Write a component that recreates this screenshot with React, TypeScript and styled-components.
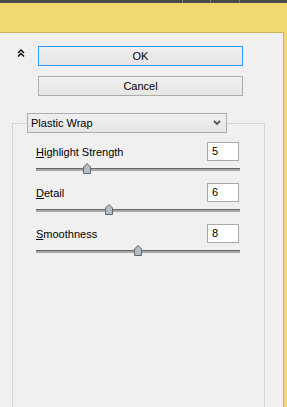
import styled, { createGlobalStyle } from 'styled-components';

const GlobalStyle = createGlobalStyle`
	body {
		margin: 0;
		font-family: 'Liberation Sans', Arial, sans-serif;
	}
`;

const Window = styled.div`
	width: 287px;
	height: 407px;
	display: flex;
	background: #f1d86f;
	overflow: hidden;
`;
const Main = styled.div`
	flex: 1;
	display: flex;
	flex-direction: column;
`;
const TopStrip = styled.div`
	height: 3px;
	display: flex;
	background: #4b4b4b;
`;
const Segment = styled.div<{ $w: number }>`
	flex: 0 0 ${(p) => p.$w}px;
	border-left: 1px solid #7d7d7d;
	&:first-child {
		border-left: none;
	}
`;
const DarkEdge = styled.div`
	width: 3px;
	background: #262626;
`;
const Frame = styled.div`
	flex: 1;
	display: flex;
	padding: 29px 6px 0 0;
	min-height: 0;
`;
const Panel = styled.div`
	flex: 1;
	display: flex;
	flex-direction: column;
	background: #f0f0f0;
	border-top: 1px solid #cbb45c;
	border-right: 1px solid #cbb45c;
	overflow: hidden;
`;
const Header = styled.div`
	display: flex;
	align-items: flex-start;
	padding: 13px 0 0 17px;
`;
const Collapse = styled.svg`
	margin-top: 3px;
	flex: 0 0 8px;
`;
const Buttons = styled.div`
	display: flex;
	flex-direction: column;
	gap: 10px;
	width: 205px;
	margin-left: 13px;
`;
const Button = styled.button<{ $default?: boolean }>`
	height: 20px;
	box-sizing: border-box;
	padding: 0;
	border: 1px solid ${(p) => (p.$default ? '#3399ff' : '#acacac')};
	background: linear-gradient(#f0f0f0, #e5e5e5);
	font-family: 'Liberation Sans', Arial, sans-serif;
	font-size: 11px;
	color: #000;
`;
const Group = styled.fieldset`
	flex: 1;
	margin: 17px 0 -20px 12px;
	width: 253px;
	box-sizing: border-box;
	padding: 0;
	border: 1px solid #d5d5d5;
`;
const Legend = styled.legend`
	padding: 0;
	margin-left: 14px;
`;
const Dropdown = styled.div`
	width: 200px;
	height: 20px;
	box-sizing: border-box;
	display: flex;
	align-items: center;
	justify-content: space-between;
	padding: 0 5px 0 3px;
	border: 1px solid #acacac;
	background: linear-gradient(#f0f0f0, #e5e5e5);
	font-size: 11px;
	color: #000;
`;
const Rows = styled.div`
	padding: 9px 24px 0 23px;
`;
const LabelLine = styled.div`
	height: 19px;
	display: flex;
	align-items: center;
	justify-content: space-between;
`;
const Label = styled.span`
	font-size: 11px;
	color: #000;
`;
const Field = styled.div`
	width: 32px;
	height: 19px;
	box-sizing: border-box;
	margin-right: 1px;
	padding: 0 4px;
	border: 1px solid #a9a9a9;
	background: #fff;
	font-size: 11px;
	line-height: 17px;
	color: #000;
`;
const Slider = styled.div`
	position: relative;
	height: 7px;
	padding-top: 5px;
	margin: 2px 0 8px;
`;
const Track = styled.div`
	height: 2px;
	border-top: 1px solid #666;
	background: #a8a8a8;
`;
const Thumb = styled.svg`
	position: absolute;
	top: 0;
`;

const TRACK = 204;

const params = [
	{ key: 'H', rest: 'ighlight Strength', value: 5, min: 0, max: 20 },
	{ key: 'D', rest: 'etail', value: 6, min: 1, max: 15 },
	{ key: 'S', rest: 'moothness', value: 8, min: 1, max: 15 },
];

const App = () => {
	return (
		<Window>
			<GlobalStyle />
			<Main>
				<TopStrip>
					<Segment $w={182} />
					<Segment $w={27} />
					<Segment $w={28} />
					<Segment $w={50} />
				</TopStrip>
				<Frame>
					<Panel>
						<Header>
							<Collapse width='8' height='8' viewBox='0 0 8 8'>
								<polyline points='1,4 4,1 7,4' fill='none' stroke='#000' strokeWidth='1.4' />
								<polyline points='1,7.5 4,4.5 7,7.5' fill='none' stroke='#000' strokeWidth='1.4' />
							</Collapse>
							<Buttons>
								<Button $default>OK</Button>
								<Button>Cancel</Button>
							</Buttons>
						</Header>
						<Group>
							<Legend>
								<Dropdown>
									Plastic Wrap
									<svg width='8' height='6' viewBox='0 0 8 6'>
										<polyline points='1,1 4,4 7,1' fill='none' stroke='#555' strokeWidth='1.8' />
									</svg>
								</Dropdown>
							</Legend>
							<Rows>
								{params.map((p) => (
									<div key={p.key}>
										<LabelLine>
											<Label>
												<u>{p.key}</u>
												{p.rest}
											</Label>
											<Field>{p.value}</Field>
										</LabelLine>
										<Slider>
											<Track />
											<Thumb
												width='8'
												height='11'
												viewBox='0 0 8 11'
												style={{ left: Math.round(((p.value - p.min) / (p.max - p.min)) * TRACK) - 4 }}
											>
												<path d='M0.5 4 L4 0.5 L7.5 4 V10.5 H0.5 Z' fill='#b4bcc4' stroke='#5d6670' />
											</Thumb>
										</Slider>
									</div>
								))}
							</Rows>
						</Group>
					</Panel>
				</Frame>
			</Main>
			<DarkEdge />
		</Window>
	);
};

export default App;
